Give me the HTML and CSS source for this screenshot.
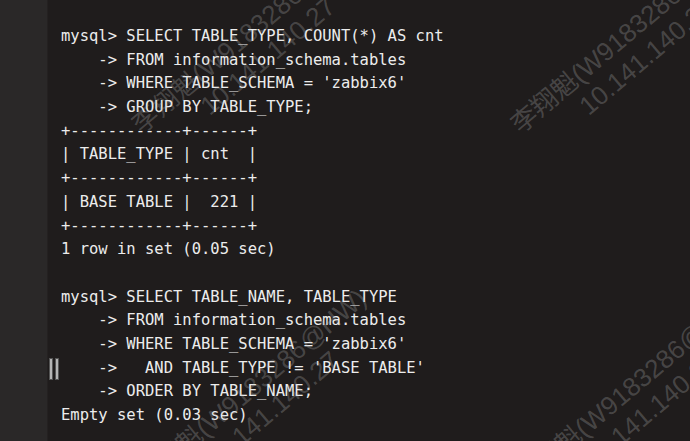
FILE: index.html
```html
<!DOCTYPE html>
<html lang="zh">
<head>
<meta charset="utf-8">
<title>mysql</title>
<link rel="stylesheet" href="styles.css">
</head>
<body>
<div class="window">
  <aside class="side"></aside>
  <main class="term">
    <div class="line"><span class="gut"></span><span class="code">mysql&gt; SELECT TABLE_TYPE, COUNT(*) AS cnt</span></div>
    <div class="line"><span class="gut"></span><span class="code">    -&gt; FROM information_schema.tables</span></div>
    <div class="line"><span class="gut"></span><span class="code">    -&gt; WHERE TABLE_SCHEMA = 'zabbix6'</span></div>
    <div class="line"><span class="gut"></span><span class="code">    -&gt; GROUP BY TABLE_TYPE;</span></div>
    <div class="line"><span class="gut"></span><span class="code">+------------+------+</span></div>
    <div class="line"><span class="gut"></span><span class="code">| TABLE_TYPE | cnt  |</span></div>
    <div class="line"><span class="gut"></span><span class="code">+------------+------+</span></div>
    <div class="line"><span class="gut"></span><span class="code">| BASE TABLE |  221 |</span></div>
    <div class="line"><span class="gut"></span><span class="code">+------------+------+</span></div>
    <div class="line"><span class="gut"></span><span class="code">1 row in set (0.05 sec)</span></div>
    <div class="line"><span class="gut"></span><span class="code"> </span></div>
    <div class="line"><span class="gut"></span><span class="code">mysql&gt; SELECT TABLE_NAME, TABLE_TYPE</span></div>
    <div class="line"><span class="gut"></span><span class="code">    -&gt; FROM information_schema.tables</span></div>
    <div class="line"><span class="gut"></span><span class="code">    -&gt; WHERE TABLE_SCHEMA = 'zabbix6'</span></div>
    <div class="line"><span class="gut"><span class="mark"><i></i><i></i></span></span><span class="code">    -&gt;   AND TABLE_TYPE != 'BASE TABLE'</span></div>
    <div class="line"><span class="gut"></span><span class="code">    -&gt; ORDER BY TABLE_NAME;</span></div>
    <div class="line"><span class="gut"></span><span class="code">Empty set (0.03 sec)</span></div>
  </main>
  <div class="wm wm-a"><div class="wm-l1">李翔魁(W9183286@HW)</div><div class="wm-l2">10.141.140.27</div></div>
  <div class="wm wm-b"><div class="wm-l1">李翔魁(W9183286@HW)</div><div class="wm-l2">10.141.140.27</div></div>
  <div class="wm wm-c"><div class="wm-l1">李翔魁(W9183286@HW)</div><div class="wm-l2">10.141.140.27</div></div>
  <div class="wm wm-d"><div class="wm-l1">李翔魁(W9183286@HW)</div><div class="wm-l2">10.141.140.27</div></div>
</div>
</body>
</html>
```
FILE: styles.css
```css
html, body {
  margin: 0;
  padding: 0;
  background: #1f1c1c;
}
.window {
  position: relative;
  width: 690px;
  height: 441px;
  overflow: hidden;
  display: flex;
  background: #1f1c1c;
}
.side {
  width: 47px;
  flex: none;
  background: #2a2828;
  border-right: 1px solid #242121;
}
.term {
  flex: 1;
  padding-top: 25px;
  font-family: "DejaVu Sans Mono", "Liberation Mono", monospace;
  font-size: 15.5px;
  line-height: 23.7px;
  color: #ececec;
}
.line {
  display: flex;
  height: 23.7px;
}
.gut {
  width: 13px;
  flex: none;
  display: flex;
  align-items: center;
}
.code {
  white-space: pre;
}
.mark {
  display: flex;
  gap: 2px;
  margin-left: 1px;
  height: 20px;
}
.mark i {
  display: block;
  width: 2px;
  height: 20px;
  background: #b4b4b4;
  border: 1px solid #555;
  box-sizing: content-box;
}
.wm {
  position: absolute;
  transform: rotate(-40deg);
  transform-origin: 0 0;
  font-family: "Liberation Sans", "Noto Sans CJK SC", sans-serif;
  font-size: 26px;
  line-height: 30px;
  color: rgba(190, 190, 190, 0.27);
  white-space: nowrap;
  pointer-events: none;
}
.wm-l2 {
  padding-left: 64px;
}
.wm-a { left: 126px; top: 116px; }
.wm-b { left: 505px; top: 116px; }
.wm-c { left: 130px; top: 470px; }
.wm-d { left: 509px; top: 470px; }
```
